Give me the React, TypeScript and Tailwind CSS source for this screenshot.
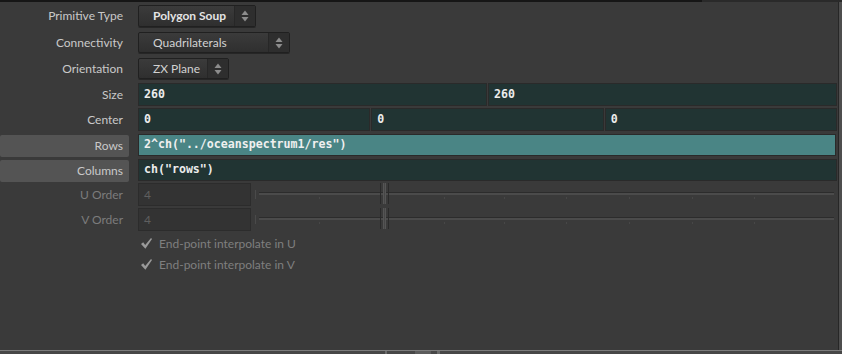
import * as React from "react";

const label = "font-['Lato','Liberation_Sans',sans-serif] text-[12px]";
const mono = "font-['DejaVu_Sans_Mono','Liberation_Mono',monospace] text-[11.6px] font-bold";

function Arrows() {
  return (
    <svg width="8" height="12" viewBox="0 0 8 12" className="text-[#8c8c8c]">
      <path d="M4 0.5 L7.5 5 L0.5 5 Z" fill="currentColor" />
      <path d="M4 11.5 L7.5 7 L0.5 7 Z" fill="currentColor" />
    </svg>
  );
}

function Menu({ text, width, bold }: { text: string; width: string; bold?: boolean }) {
  return (
    <div
      className={`${width} h-full flex items-stretch rounded-[2px] border border-[#202020] bg-gradient-to-b from-[#3b3b3b] to-[#2f2f2f] shadow-[0_1px_0_#262626]`}
    >
      <div
        className={`flex-1 flex items-center pl-[14px] ${label} ${bold ? "font-bold text-[#e4e4e4]" : "text-[#d2d2d2]"}`}
      >
        {text}
      </div>
      <div className="w-[21px] flex items-center justify-center border-l border-[#272727] bg-[#2e2e2e]">
        <Arrows />
      </div>
    </div>
  );
}

function Label({ text, dim, boxed }: { text: string; dim?: boolean; boxed?: boolean }) {
  return (
    <div className="w-[138px] shrink-0 h-full pr-[9px]">
      <div
        className={`h-full flex items-center justify-end pr-[6px] ${label} ${
          dim ? "text-[#7c7c7c]" : "text-[#c9c9c9]"
        } ${boxed ? "bg-[#545454] rounded-[2px] my-[1px] h-[20px]" : ""}`}
      >
        {text}
      </div>
    </div>
  );
}

function Field({ text, bright }: { text: string; bright?: boolean }) {
  return (
    <div
      className={`flex-1 h-full flex items-center pl-[5px] border border-[#2a2a2a] ${mono} ${
        bright ? "bg-[#4a8585] text-[#f0f0f0]" : "bg-[#213433] text-[#ececec]"
      }`}
    >
      {text}
    </div>
  );
}

function Slider() {
  const ticks = [320, 445, 505, 567, 630, 693, 755];
  return (
    <div className="relative flex-1 h-full ml-[4px] mr-[3px]">
      <div className="absolute left-0 top-[7px] w-[1px] h-[9px] bg-[#4a4a4a]" />
      <div className="absolute left-[4px] right-0 top-[9px] h-[1px] bg-[#2c2c2c]" />
      <div className="absolute left-[4px] right-0 top-[10px] h-[2px] bg-[#4b4b4b]" />
      {ticks.map((t) => (
        <div
          key={t}
          className="absolute top-[14px] w-[1px] h-[2px] bg-[#474747]"
          style={{ left: t - 256 }}
        />
      ))}
      <div className="absolute left-[125px] top-0 w-[9px] h-[21px] flex justify-center gap-[2px]">
        <div className="w-[1px] h-full bg-[#2a2a2a]" />
        <div className="w-[3px] h-full bg-[#464646] border-x border-[#555]" />
        <div className="w-[1px] h-full bg-[#2a2a2a]" />
      </div>
    </div>
  );
}

function Check({ text }: { text: string }) {
  return (
    <div className="h-[21px] flex items-center">
      <div className="w-[139px] shrink-0" />
      <div className="w-[15px] h-[16px] flex items-center justify-center">
        <svg width="13" height="13" viewBox="0 0 13 13">
          <path d="M1 7 L3.2 5.2 L5.2 8 L11 1 L12 2 L5.4 11.8 Z" fill="#9a9a9a" />
        </svg>
      </div>
      <span className={`ml-[5px] ${label} text-[#7f7f7f]`}>{text}</span>
    </div>
  );
}

export default function App() {
  return (
    <div className="w-[842px] h-[354px] bg-[#3a3a3a] flex flex-col overflow-hidden">
      <div className="flex h-[2px] shrink-0">
        <div className="w-[702px] bg-[#161616]" />
        <div className="flex-1 bg-[#2a2a2a]" />
      </div>
      <div className="flex flex-1">
        <div className="flex-1 flex flex-col pt-[3px] pr-[1px]">
          <div className="flex h-[22px]">
            <Label text="Primitive Type" />
            <Menu text="Polygon Soup" width="w-[118px]" bold />
          </div>
          <div className="flex h-[21px] mt-[5px]">
            <Label text="Connectivity" />
            <Menu text="Quadrilaterals" width="w-[152px]" />
          </div>
          <div className="flex h-[21px] mt-[5px]">
            <Label text="Orientation" />
            <Menu text="ZX Plane" width="w-[91px]" />
          </div>
          <div className="flex h-[23px] mt-[4px]">
            <Label text="Size" />
            <div className="flex-1 flex gap-[1px]">
              <Field text="260" />
              <Field text="260" />
            </div>
          </div>
          <div className="flex h-[23px] mt-[2px]">
            <Label text="Center" />
            <div className="flex-1 flex gap-[1px]">
              <Field text="0" />
              <Field text="0" />
              <Field text="0" />
            </div>
          </div>
          <div className="flex h-[22px] mt-[3px]">
            <Label text="Rows" boxed />
            <div className="flex-1 flex pr-[1px]">
              <Field text={'2^ch("../oceanspectrum1/res")'} bright />
            </div>
          </div>
          <div className="flex h-[22px] mt-[3px]">
            <Label text="Columns" boxed />
            <div className="flex-1 flex">
              <Field text={'ch("rows")'} />
            </div>
          </div>
          <div className="flex h-[23px] mt-[2px]">
            <Label text="U Order" dim />
            <div className="w-[113px] h-full flex items-center pl-[5px] bg-[#333333] border border-[#2c2c2c] text-[#5f5f5f] font-['Lato',sans-serif] text-[12px]">
              4
            </div>
            <Slider />
          </div>
          <div className="flex h-[23px] mt-[2px]">
            <Label text="V Order" dim />
            <div className="w-[113px] h-full flex items-center pl-[5px] bg-[#333333] border border-[#2c2c2c] text-[#5f5f5f] font-['Lato',sans-serif] text-[12px]">
              4
            </div>
            <Slider />
          </div>
          <div className="mt-[2px]">
            <Check text="End-point interpolate in U" />
            <Check text="End-point interpolate in V" />
          </div>
        </div>
        <div className="w-[1px] bg-[#262626]" />
        <div className="w-[3px] bg-[#4e4e4e]" />
      </div>
      <div className="h-[1px] bg-[#7c7c7c] shrink-0" />
      <div className="h-[3px] bg-[#474747] shrink-0 flex">
        <div className="ml-[385px] w-[2px] bg-[#6a6a6a]" />
        <div className="ml-[28px] w-[16px] bg-[#5c5c5c]" />
        <div className="ml-[6px] w-[3px] bg-[#6a6a6a]" />
      </div>
    </div>
  );
}
